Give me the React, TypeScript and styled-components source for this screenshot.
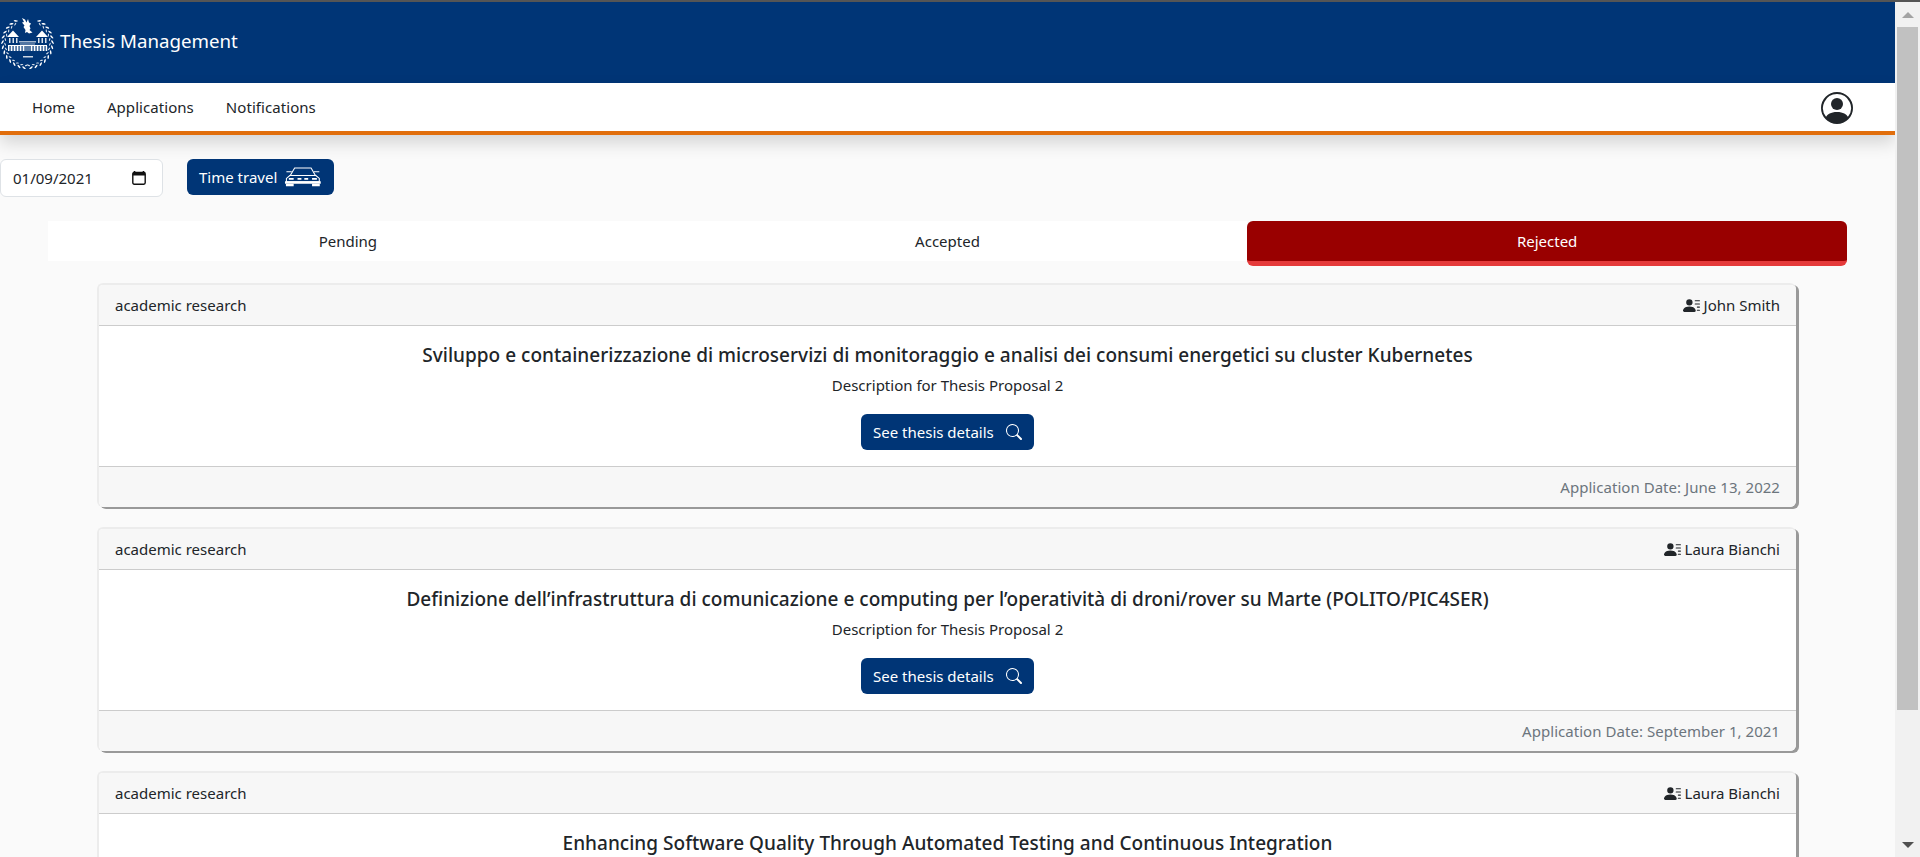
import React from "react";
import styled, { createGlobalStyle } from "styled-components";

const Global = createGlobalStyle`
  html, body { margin: 0; padding: 0; height: 100%; overflow: hidden; background: #fafafa; }
  * { box-sizing: border-box; }
  body { font-family: "Noto Sans", "Open Sans", sans-serif; color: #212529; font-size: 15px; }
`;

const Shell = styled.div`
  display: flex;
  height: 857px;
  overflow: hidden;
  border-top: 2px solid #555;
`;
const Page = styled.div`
  width: 1895px;
  flex: none;
  display: flex;
  flex-direction: column;
  overflow: hidden;
`;
const ScrollTrack = styled.div`
  width: 25px;
  flex: none;
  background: #f1f1f1;
  display: flex;
  flex-direction: column;
  align-items: center;
`;
const ScrollUp = styled.div`
  width: 0;
  height: 0;
  margin: 10px 0 9px;
  border-left: 6px solid transparent;
  border-right: 6px solid transparent;
  border-bottom: 6px solid #a3a3a3;
`;
const ScrollDown = styled.div`
  width: 0;
  height: 0;
  margin: auto 0 9px;
  border-left: 6px solid transparent;
  border-right: 6px solid transparent;
  border-top: 6px solid #505050;
`;
const ScrollThumb = styled.div`
  width: 21px;
  height: 683px;
  background: #c1c1c1;
`;
const BrandBar = styled.header`
  height: 81px;
  background: #003576;
  display: flex;
  align-items: center;
  gap: 5px;
  color: #fff;
  flex: none;
`;
const BrandLogo = styled.svg`
  flex: none;
`;
const BrandText = styled.span`
  font-size: 18.7px;
  margin-bottom: 4px;
  white-space: nowrap;
`;
const NavBar = styled.nav`
  height: 52px;
  flex: none;
  background: #fff;
  border-bottom: 4px solid #e16e0c;
  box-shadow: 0 8px 16px rgba(0, 0, 0, 0.15);
  display: flex;
  align-items: center;
  justify-content: space-between;
  padding: 0 42px 0 32px;
  position: relative;
`;
const NavLinks = styled.div`
  display: flex;
  gap: 32px;
`;
const NavLink = styled.a`
  font-size: 15px;
  letter-spacing: 0.06px;
  color: #212529;
`;
const UserIcon = styled.svg`
  margin-top: 2px;
`;
const TravelRow = styled.div`
  display: flex;
  align-items: flex-start;
  gap: 24px;
  padding-top: 24px;
  flex: none;
`;
const DateBox = styled.div`
  width: 163px;
  height: 38px;
  background: #fff;
  border: 1px solid #dee2e6;
  border-radius: 6px;
  display: flex;
  align-items: center;
  justify-content: space-between;
  padding: 0 16px 0 12px;
  font-size: 15px;
`;
const NavyButton = styled.button`
  height: 36px;
  border: 0;
  border-radius: 6px;
  background: #003576;
  color: #fff;
  font: inherit;
  font-size: 15px;
  white-space: nowrap;
  display: inline-flex;
  align-items: center;
  padding: 0 12px;
`;
const TimeButton = styled(NavyButton)`
  width: 147px;
  gap: 7px;
`;
const DetailsButton = styled(NavyButton)`
  gap: 12px;
  width: 173px;
`;
const Tabs = styled.div`
  display: grid;
  grid-template-columns: repeat(3, 599.67px);
  margin: 24px 0 0 48px;
  flex: none;
  align-items: start;
`;
const Tab = styled.div<{ $active?: boolean }>`
  height: ${(p) => (p.$active ? "45px" : "40px")};
  display: flex;
  align-items: center;
  justify-content: center;
  font-size: 15px;
  background: ${(p) => (p.$active ? "#990000" : "#fff")};
  color: ${(p) => (p.$active ? "#fff" : "#212529")};
  border-bottom: ${(p) => (p.$active ? "5px solid #e53a3a" : "0")};
  border-radius: ${(p) => (p.$active ? "6px" : "0")};
`;
const CardList = styled.div`
  display: flex;
  flex-direction: column;
  gap: 20px;
  margin: 17px 0 0 97px;
  width: 1699px;
`;
const Card = styled.article`
  flex: none;
  height: 224px;
  background: #fff;
  border: 2px solid #ececec;
  border-right: 0;
  border-bottom: 0;
  border-radius: 6px;
  box-shadow: 3px 2px 0 #999;
  display: flex;
  flex-direction: column;
  overflow: hidden;
`;
const CardHeader = styled.div`
  height: 41px;
  flex: none;
  background: #f7f7f7;
  border-bottom: 1px solid #ccc;
  display: flex;
  align-items: center;
  justify-content: space-between;
  padding: 0 16px;
  font-size: 15px;
`;
const Supervisor = styled.span`
  display: inline-flex;
  align-items: center;
  gap: 4px;
`;
const CardBody = styled.div`
  height: 140px;
  flex: none;
  display: flex;
  flex-direction: column;
  align-items: center;
  padding-top: 17px;
`;
const CardTitle = styled.h5`
  margin: 0;
  font-size: 19px;
  font-weight: 500;
  line-height: 24px;
  letter-spacing: 0.02px;
  white-space: nowrap;
`;
const CardText = styled.p`
  margin: 7px 0 18px;
  font-size: 15px;
  line-height: 22px;
`;
const CardFooter = styled.div`
  flex: 1;
  background: #f7f7f7;
  border-top: 1px solid #ccc;
  display: flex;
  align-items: center;
  justify-content: flex-end;
  padding: 0 16px;
  font-size: 15px;
  letter-spacing: 0.04px;
  color: #6c757d;
`;

const leafAngles = [-62, -50, -38, -26, -14, -2, 10, 22, 34, 46, 58, 70, 82];

const Logo = () => (
  <BrandLogo width="55" height="52" viewBox="0 0 55 52" fill="#fff">
    {leafAngles.map((deg) => {
      const a = (Math.PI * deg) / 180;
      const outer = 25;
      const inner = 22.4;
      const cx = 27.5;
      const cy = 26;
      const rx = outer * Math.cos(a);
      const ry = cy + outer * Math.sin(a);
      const ix = inner * Math.cos(a + 0.09);
      const iy = cy + inner * Math.sin(a + 0.09);
      return (
        <g key={deg}>
          <ellipse cx={cx + rx} cy={ry} rx="2.1" ry=".8" transform={`rotate(${deg + 60} ${cx + rx} ${ry})`} />
          <ellipse cx={cx - rx} cy={ry} rx="2.1" ry=".8" transform={`rotate(${-deg - 60} ${cx - rx} ${ry})`} />
          <ellipse cx={cx + ix} cy={iy} rx="1.6" ry=".6" transform={`rotate(${deg + 120} ${cx + ix} ${iy})`} opacity=".85" />
          <ellipse cx={cx - ix} cy={iy} rx="1.6" ry=".6" transform={`rotate(${-deg - 120} ${cx - ix} ${iy})`} opacity=".85" />
        </g>
      );
    })}
    <path d="M22 1l3 1.5 1.5 3 1.5-3.5 1 3.5 2 1-1.5 2.5 1 2.5-1 1.5 3 2.5-3.5 1-2-1.5-2 1 .5-3-2-3 1-1.5-2.5-3 2-.5z" />
    <path d="M7 20l6-6.5L19 20zM36 20l6-6.5L48 20z" />
    <path d="M9 21h1.5v5H9zM12.5 21H14v5h-1.5zM16 21h1.5v5H16zM38 21h1.5v5H38zM41.5 21H43v5h-1.5zM45 21h1.5v5H45z" opacity=".85" />
    <path d="M19 24h17v1.6H19zM20 26.500h15v1H20z" opacity=".65" />
    <path d="M8 28h39v1H8z" />
    <path d="M8 29h39v5H8z" opacity=".35" />
    <path d="M8 29h1.2v5H8zM11 29h1.2v5H11zM14 29h1.2v5H14zM17 29h1.2v5H17zM20 29h1.200v5H20zM23 29h1.200v5H23zM31 29h1.200v5H31zM34 29h1.200v5H34zM37 29h1.200v5H37zM40 29h1.200v5H40zM43 29h1.200v5H43zM46 29h1.200v5H46z" />
    <path d="M23 39h10v1.500H23z" opacity=".8" />
  </BrandLogo>
);

const Calendar = () => (
  <svg width="14" height="14" viewBox="0 0 14 14">
    <path d="M2.500 0v2M11.500 0v2" stroke="#111" strokeWidth="1.6" />
    <rect x="0.8" y="1.5" width="12.4" height="11.7" rx="1.4" fill="#fff" stroke="#111" strokeWidth="1.4" />
    <rect x="0.8" y="1.5" width="12.4" height="3" fill="#111" />
  </svg>
);

const Car = () => (
  <svg width="39" height="20" viewBox="0 0 39 20" fill="none" stroke="#fff">
    <path d="M11 .7h17l4.500 7.800h-26z" strokeWidth="1.100" />
    <path d="M2.500 4.500h5.500M31 4.500h5.500" strokeWidth="1.100" />
    <path d="M6 8.500h27l3.500 3v3.500h-34v-3.500z" strokeWidth="1.100" />
    <path d="M5 11h5v1.800H5zM14 11h4v1.800h-4zM21 11h4v1.800h-4zM29 11h5v1.800h-5z" fill="#fff" stroke="none" />
    <path d="M1 14.500h37v2.500H1z" fill="#fff" stroke="none" />
    <path d="M2 17h8v2.500H2zM29 17h8v2.500h-8z" fill="#fff" stroke="none" />
  </svg>
);

const Search = () => (
  <svg width="16" height="16" viewBox="0 0 16 16" fill="#fff">
    <path d="M11.742 10.344a6.500 6.500 0 1 0-1.397 1.398h-.001c.03.04.062.078.098.115l3.850 3.850a1 1 0 0 0 1.415-1.414l-3.850-3.850a1.007 1.007 0 0 0-.115-.1zM12 6.500a5.500 5.500 0 1 1-11 0 5.500 5.500 0 0 1 11 0z" />
  </svg>
);

const PersonLines = () => (
  <svg width="17" height="17" viewBox="0 0 16 16" fill="#212529">
    <path d="M6 8a3 3 0 1 0 0-6 3 3 0 0 0 0 6zm-5 6s-1 0-1-1 1-4 6-4 6 3 6 4-1 1-1 1H1zM11 3.500a.5.5 0 0 1 .5-.5h4a.5.5 0 0 1 0 1h-4a.5.5 0 0 1-.5-.5zm.5 2.500a.5.5 0 0 0 0 1h4a.5.5 0 0 0 0-1h-4zm2 3a.5.5 0 0 0 0 1h2a.5.5 0 0 0 0-1h-2zm0 3a.5.5 0 0 0 0 1h2a.5.5 0 0 0 0-1h-2z" />
  </svg>
);

const UserCircle = () => (
  <UserIcon width="32" height="32" viewBox="0 0 16 16" fill="#212529">
    <path d="M11 6a3 3 0 1 1-6 0 3 3 0 0 1 6 0z" />
    <path fillRule="evenodd" d="M0 8a8 8 0 1 1 16 0A8 8 0 0 1 0 8zm8-7a7 7 0 0 0-5.468 11.370C3.242 11.226 4.805 10 8 10s4.757 1.225 5.468 2.370A7 7 0 0 0 8 1z" />
  </UserIcon>
);

const cards: { who: string; title: string; date?: string }[] = [
  { who: "John Smith", title: "Sviluppo e containerizzazione di microservizi di monitoraggio e analisi dei consumi energetici su cluster Kubernetes", date: "June 13, 2022" },
  { who: "Laura Bianchi", title: "Definizione dell’infrastruttura di comunicazione e computing per l’operatività di droni/rover su Marte (POLITO/PIC4SER)", date: "September 1, 2021" },
  { who: "Laura Bianchi", title: "Enhancing Software Quality Through Automated Testing and Continuous Integration" },
];

export default function App() {
  return (
    <>
      <Global />
      <Shell>
        <Page>
          <BrandBar>
            <Logo />
            <BrandText>Thesis Management</BrandText>
          </BrandBar>
          <NavBar>
            <NavLinks>
              <NavLink>Home</NavLink>
              <NavLink>Applications</NavLink>
              <NavLink>Notifications</NavLink>
            </NavLinks>
            <UserCircle />
          </NavBar>
          <TravelRow>
            <DateBox>
              01/09/2021
              <Calendar />
            </DateBox>
            <TimeButton>
              Time travel
              <Car />
            </TimeButton>
          </TravelRow>
          <Tabs>
            <Tab>Pending</Tab>
            <Tab>Accepted</Tab>
            <Tab $active>Rejected</Tab>
          </Tabs>
          <CardList>
            {cards.map((c) => (
              <Card key={c.title}>
                <CardHeader>
                  <span>academic research</span>
                  <Supervisor>
                    <PersonLines />
                    {c.who}
                  </Supervisor>
                </CardHeader>
                <CardBody>
                  <CardTitle>{c.title}</CardTitle>
                  {c.date && (
                    <>
                      <CardText>Description for Thesis Proposal 2</CardText>
                      <DetailsButton>
                        See thesis details
                        <Search />
                      </DetailsButton>
                    </>
                  )}
                </CardBody>
                {c.date && <CardFooter>Application Date: {c.date}</CardFooter>}
              </Card>
            ))}
          </CardList>
        </Page>
        <ScrollTrack>
          <ScrollUp />
          <ScrollThumb />
          <ScrollDown />
        </ScrollTrack>
      </Shell>
    </>
  );
}
